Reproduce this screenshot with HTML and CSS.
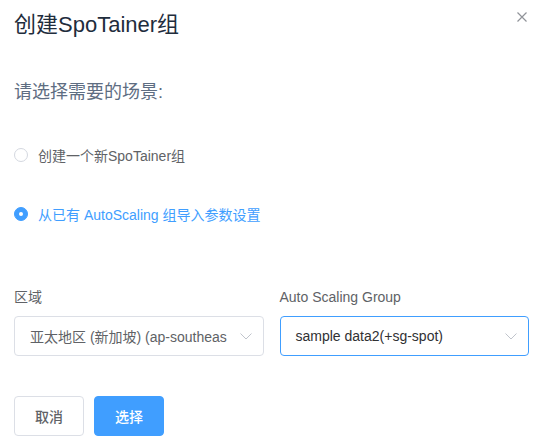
FILE: index.html
```html
<!DOCTYPE html>
<html lang="zh">
<head>
<meta charset="utf-8">
<link rel="stylesheet" href="styles.css">
</head>
<body>
<div class="dialog">
  <div class="header">
    <h1 class="title">创建SpoTainer组</h1>
    <span class="close">
      <svg width="10" height="10" viewBox="0 0 10 10"><path d="M0.5 0.5L9.5 9.5M9.5 0.5L0.5 9.5" stroke="#909399" stroke-width="1.2" fill="none"/></svg>
    </span>
  </div>
  <p class="subtitle">请选择需要的场景:</p>
  <label class="radio radio-first">
    <span class="radio-dot"></span>
    <span class="radio-label">创建一个新SpoTainer组</span>
  </label>
  <label class="radio radio-second checked">
    <span class="radio-dot"></span>
    <span class="radio-label">从已有 AutoScaling 组导入参数设置</span>
  </label>
  <div class="fields">
    <div class="field">
      <div class="field-label">区域</div>
      <div class="select">
        <span class="select-text muted">亚太地区 (新加坡) (ap-southeas</span>
        <svg class="arrow" width="12" height="7" viewBox="0 0 12 7"><path d="M0.5 0.5L6 6L11.5 0.5" stroke="#c0c4cc" stroke-width="1" fill="none"/></svg>
      </div>
    </div>
    <div class="field">
      <div class="field-label">Auto Scaling Group</div>
      <div class="select focused">
        <span class="select-text">sample data2(+sg-spot)</span>
        <svg class="arrow" width="12" height="7" viewBox="0 0 12 7"><path d="M0.5 0.5L6 6L11.5 0.5" stroke="#c0c4cc" stroke-width="1" fill="none"/></svg>
      </div>
    </div>
  </div>
  <div class="buttons">
    <button class="btn">取消</button>
    <button class="btn primary">选择</button>
  </div>
</div>
</body>
</html>
```

FILE: styles.css
```css
* { box-sizing: border-box; }
html, body {
  margin: 0;
  padding: 0;
  background: #fff;
  font-family: "Liberation Sans", "Noto Sans CJK SC", sans-serif;
}
.dialog {
  width: 539px;
  height: 446px;
  padding: 13px 10px 0 14px;
  display: flex;
  flex-direction: column;
}
.header {
  display: flex;
  justify-content: space-between;
  align-items: flex-start;
}
.title {
  margin: 0;
  font-size: 22px;
  line-height: 24px;
  font-weight: 400;
  color: #1f2d3d;
}
.close {
  display: flex;
  margin-top: -1px;
  margin-right: 2px;
}
.subtitle {
  margin: 44px 0 0;
  font-size: 18px;
  line-height: 22px;
  color: #5e6d82;
}
.radio {
  display: flex;
  align-items: center;
  height: 20px;
  font-size: 14px;
  color: #606266;
}
.radio-first { margin-top: 42px; }
.radio-second { margin-top: 39px; }
.radio-dot {
  width: 14px;
  height: 14px;
  border-radius: 50%;
  border: 1px solid #d4d8e0;
  background: #fff;
  margin-right: 10px;
  display: flex;
  align-items: center;
  justify-content: center;
}
.checked .radio-dot {
  border-color: #409eff;
  background: #409eff;
}
.checked .radio-dot::after {
  content: "";
  width: 4px;
  height: 4px;
  border-radius: 50%;
  background: #fff;
}
.checked .radio-label { color: #409eff; }
.fields {
  display: flex;
  gap: 16px;
  margin-top: 63px;
}
.field { width: 250px; }
.field-label {
  font-size: 14px;
  line-height: 20px;
  color: #606266;
  margin-bottom: 9px;
}
.select {
  height: 40px;
  border: 1px solid #dcdfe6;
  border-radius: 4px;
  display: flex;
  align-items: center;
  padding: 0 11px 0 15px;
}
.select.focused { border-color: #409eff; }
.select-text {
  flex: 1;
  white-space: nowrap;
  font-size: 14px;
  color: #303133;
  margin-right: 10px;
}
.select-text.muted { color: #606266; }
.arrow { flex: none; }
.buttons {
  display: flex;
  gap: 10px;
  margin-top: 40px;
}
.btn {
  height: 40px;
  padding: 0 20px;
  border: 1px solid #dcdfe6;
  border-radius: 4px;
  background: #fff;
  color: #606266;
  font-family: inherit;
  font-size: 14px;
  font-weight: 500;
}
.btn.primary {
  background: #409eff;
  border-color: #409eff;
  color: #fff;
}
```
